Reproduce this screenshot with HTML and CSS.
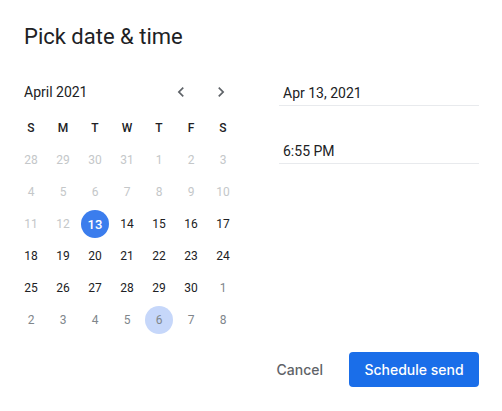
FILE: index.html
```html
<!DOCTYPE html>
<html>
<head>
<meta charset="utf-8">
<link rel="stylesheet" href="styles.css">
</head>
<body>
<div class="dialog">
  <div class="title">Pick date &amp; time</div>
  <div class="body">
    <div class="calendar">
      <div class="cal-header">
        <span class="month">April 2021</span>
        <button class="nav" aria-label="Previous month"><svg viewBox="0 0 24 24" width="20" height="20"><path d="M15.41 7.41L14 6l-6 6 6 6 1.41-1.41L10.83 12z"/></svg></button>
        <button class="nav" aria-label="Next month"><svg viewBox="0 0 24 24" width="20" height="20"><path d="M8.59 16.59L10 18l6-6-6-6-1.41 1.41L13.170 12z"/></svg></button>
      </div>
      <div class="grid">
        <span class="dow">S</span><span class="dow">M</span><span class="dow">T</span><span class="dow">W</span><span class="dow">T</span><span class="dow">F</span><span class="dow">S</span>
        <span class="day past">28</span><span class="day past">29</span><span class="day past">30</span><span class="day past">31</span><span class="day past">1</span><span class="day past">2</span><span class="day past">3</span>
        <span class="day past">4</span><span class="day past">5</span><span class="day past">6</span><span class="day past">7</span><span class="day past">8</span><span class="day past">9</span><span class="day past">10</span>
        <span class="day past">11</span><span class="day past">12</span><span class="day"><span class="dot selected">13</span></span><span class="day">14</span><span class="day">15</span><span class="day">16</span><span class="day">17</span>
        <span class="day">18</span><span class="day">19</span><span class="day">20</span><span class="day">21</span><span class="day">22</span><span class="day">23</span><span class="day">24</span>
        <span class="day">25</span><span class="day">26</span><span class="day">27</span><span class="day">28</span><span class="day">29</span><span class="day">30</span><span class="day other">1</span>
        <span class="day other">2</span><span class="day other">3</span><span class="day other">4</span><span class="day other">5</span><span class="day other"><span class="dot hover">6</span></span><span class="day other">7</span><span class="day other">8</span>
      </div>
    </div>
    <div class="fields">
      <div class="field">Apr 13, 2021</div>
      <div class="field field-time">6:55 PM</div>
    </div>
  </div>
  <div class="footer">
    <button class="btn btn-text">Cancel</button>
    <button class="btn btn-primary">Schedule send</button>
  </div>
</div>
</body>
</html>
```
FILE: styles.css
```css
html, body {
  margin: 0;
  background: #ffffff;
}
body {
  font-family: Roboto, "Liberation Sans", sans-serif;
  color: #202124;
}
.dialog {
  width: 502px;
  height: 411px;
  box-sizing: border-box;
  padding: 23px 23px 24px 15px;
  display: flex;
  flex-direction: column;
}
.title {
  font-size: 22px;
  line-height: 28px;
  margin-left: 9px;
  color: #202124;
  font-weight: 400;
}
.body {
  display: flex;
  gap: 40px;
  margin-top: 23px;
}
.calendar {
  width: 224px;
}
.cal-header {
  height: 36px;
  margin-bottom: 2px;
  display: flex;
  align-items: center;
  padding-left: 9px;
  padding-right: 6px;
}
.month {
  font-size: 14px;
  flex: 1;
  color: #202124;
}
.nav {
  width: 24px;
  height: 24px;
  padding: 0;
  border: 0;
  background: none;
  display: flex;
  align-items: center;
  justify-content: center;
  margin-left: 16px;
}
.nav svg {
  fill: #5f6368;
}
.grid {
  display: grid;
  grid-template-columns: repeat(7, 32px);
  grid-auto-rows: 32px;
}
.dow, .day {
  display: flex;
  align-items: center;
  justify-content: center;
  font-size: 12px;
}
.dow {
  font-weight: 500;
  color: #202124;
}
.day {
  color: #202124;
}
.day.past {
  color: #c4c7c9;
}
.day.other {
  color: #80868b;
}
.dot {
  width: 28px;
  height: 28px;
  border-radius: 50%;
  display: flex;
  align-items: center;
  justify-content: center;
}
.dot.selected {
  background: #3b7ded;
  color: #ffffff;
  font-weight: 500;
  font-size: 13px;
}
.dot.hover {
  background: #c6d7fa;
  color: #80868b;
}
.fields {
  width: 200px;
  padding-top: 7px;
}
.field {
  height: 24px;
  line-height: 24px;
  font-size: 14px;
  padding-left: 4px;
  border-bottom: 1px solid #e8eaed;
  color: #202124;
}
.field-time {
  margin-top: 33px;
}
.footer {
  margin-top: auto;
  display: flex;
  justify-content: flex-end;
  align-items: center;
  gap: 12px;
}
.btn {
  font-family: Inter, Roboto, "Liberation Sans", sans-serif;
  font-size: 14px;
  font-weight: 500;
  height: 35px;
  border: 0;
  border-radius: 4px;
  padding: 0 14px;
  background: none;
  cursor: pointer;
}
.btn-text {
  color: #5f6368;
}
.btn-primary {
  width: 130px;
  padding: 0;
  background: #1a6ee9;
  color: #ffffff;
}
```
